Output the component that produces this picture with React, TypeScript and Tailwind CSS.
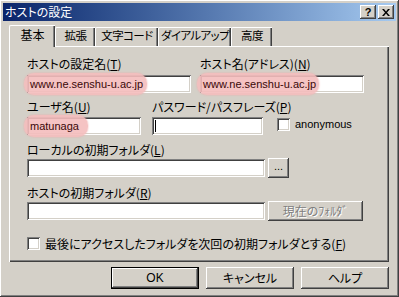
import React from 'react';

const FONT = "font-['Noto_Sans_CJK_JP','Liberation_Sans',sans-serif] [font-feature-settings:'palt']";
const LATIN = "font-['Liberation_Sans','Noto_Sans_CJK_JP',sans-serif]";

const raised =
  'shadow-[inset_-1px_-1px_#404040,inset_1px_1px_#ffffff,inset_-2px_-2px_#808080,inset_2px_2px_#d4d0c8]';
const sunken =
  'shadow-[inset_1px_1px_#808080,inset_-1px_-1px_#ffffff,inset_2px_2px_#404040,inset_-2px_-2px_#d4d0c8]';

const Label = ({ text, k }: { text: string; k: string }) => (
  <div className="h-[12px] leading-[12px] text-[12px] text-black whitespace-nowrap">
    {text}(<span className="underline">{k}</span>)
  </div>
);

const Mark = ({ w }: { w: number }) => (
  <span
    className="absolute -left-[3px] -top-[2px] -bottom-[2px] rounded-[10px] bg-[#f4bcbc]/90 shadow-[0_0_2px_#f0a8a8]"
    style={{ width: w }}
  />
);

const Edit = ({
  w,
  value,
  mark,
  cursor,
}: {
  w: number;
  value?: string;
  mark?: number;
  cursor?: boolean;
}) => (
  <div className={`relative h-[18px] bg-white ${sunken}`} style={{ width: w }}>
    {mark && <Mark w={mark} />}
    {value && (
      <span
        className={`absolute left-[3px] top-0 h-[18px] leading-[18px] text-[11px] text-[#3a0808] ${LATIN}`}
      >
        {value}
      </span>
    )}
    {cursor && <span className="absolute left-[3px] top-[3px] w-[1px] h-[12px] bg-black" />}
  </div>
);

const Check = () => <div className={`w-[13px] h-[13px] bg-white ${sunken}`} />;

const Tab = ({ label, w, active }: { label: string; w: number; active?: boolean }) =>
  active ? (
    <div
      className="relative z-10 h-[22px] -mb-[1px] flex items-center justify-center whitespace-nowrap text-[12px] bg-[#d4d0c8] rounded-tl-[2px] border-t border-l border-white shadow-[inset_-1px_0_#404040,inset_-2px_0_#808080] pb-[3px]"
      style={{ width: w }}
    >
      {label}
    </div>
  ) : (
    <div
      className="h-[19px] flex items-center justify-center whitespace-nowrap tracking-[-0.6px] text-[11.5px] rounded-tl-[2px] border-t border-l border-white shadow-[inset_-1px_0_#404040,inset_-2px_0_#808080] pb-[2px]"
      style={{ width: w }}
    >
      {label}
    </div>
  );

export default function App() {
  return (
    <div
      className={`w-[399px] h-[297px] bg-[#d4d0c8] p-[3px] flex flex-col text-black ${FONT} ${raised}`}
    >
      {/* title bar */}
      <div className="h-[18px] flex items-center justify-between pl-[2px] pr-[2px] bg-gradient-to-r from-[#0a246a] to-[#a6caf0]">
        <span className="text-white text-[12px] leading-[12px]">ホストの設定</span>
        <div className="flex gap-[2px]">
          <div
            className={`w-[16px] h-[14px] bg-[#d4d0c8] flex items-center justify-center text-[11px] font-bold leading-none ${LATIN} ${raised}`}
          >
            ?
          </div>
          <div className={`w-[16px] h-[14px] bg-[#d4d0c8] flex items-center justify-center ${raised}`}>
            <svg width="8" height="7" viewBox="0 0 8 7">
              <path d="M0 0h2l2 2.5L6 0h2L5 3.5 8 7H6L4 4.5 2 7H0l3-3.5z" fill="#000" />
            </svg>
          </div>
        </div>
      </div>

      <div className="pl-[6px] pt-[4px]">
        {/* tabs */}
        <div className="flex items-end h-[21px]">
          <Tab label="基本" w={46} active />
          <Tab label="拡張" w={40} />
          <Tab label="文字コード" w={63} />
          <Tab label="ダイアルアップ" w={73} />
          <Tab label="高度" w={41} />
        </div>

        {/* panel */}
        <div
          className="w-[380px] h-[216px] pl-[18px] pt-[12px] shadow-[inset_1px_1px_#ffffff,inset_-1px_-1px_#404040,inset_-2px_-2px_#808080]"
        >
          <div className="flex">
            <div className="w-[173px]">
              <Label text="ホストの設定名" k="T" />
              <div className="mt-[5px]">
                <Edit w={164} value="www.ne.senshu-u.ac.jp" mark={123} />
              </div>
            </div>
            <div>
              <Label text="ホスト名(アドレス)" k="N" />
              <div className="mt-[5px]">
                <Edit w={164} value="www.ne.senshu-u.ac.jp" mark={122} />
              </div>
            </div>
          </div>

          <div className="flex mt-[8px]">
            <div className="w-[125px]">
              <Label text="ユーザ名" k="U" />
              <div className="mt-[4px]">
                <Edit w={114} value="matunaga" mark={64} />
              </div>
            </div>
            <div className="w-[125px]">
              <Label text="パスワード/パスフレーズ" k="P" />
              <div className="mt-[4px]">
                <Edit w={111} cursor />
              </div>
            </div>
            <div className="flex items-center gap-[5px] mt-[17px] self-start">
              <Check />
              <span className={`text-[11px] leading-[13px] ${LATIN}`}>anonymous</span>
            </div>
          </div>

          <div className="mt-[9px]">
            <Label text="ローカルの初期フォルダ" k="L" />
            <div className="flex items-center gap-[3px] mt-[2px] h-[20px]">
              <Edit w={238} />
              <div
                className={`w-[21px] h-[20px] flex items-center justify-center text-[11px] pb-[4px] ${LATIN} ${raised}`}
              >
                ...
              </div>
            </div>
          </div>

          <div className="mt-[9px]">
            <Label text="ホストの初期フォルダ" k="R" />
            <div className="flex items-center gap-[3px] mt-[2px] h-[20px]">
              <Edit w={238} />
              <div
                className={`w-[95px] h-[20px] flex items-center justify-center text-[12px] text-[#808080] [text-shadow:1px_1px_#ffffff] ${raised}`}
              >
                現在のﾌｫﾙﾀﾞ
              </div>
            </div>
          </div>

          <div className="flex items-center gap-[5px] mt-[16px]">
            <Check />
            <span className="text-[12px] leading-[13px]">
              最後にアクセスしたフォルダを次回の初期フォルダとする(<span className="underline">F</span>)
            </span>
          </div>
        </div>
      </div>

      {/* buttons */}
      <div className="flex justify-end gap-[7px] pr-[7px] mt-[5px]">
        <div className="w-[88px] h-[22px] border border-black">
          <div className={`w-full h-full flex items-center justify-center text-[12px] ${LATIN} ${raised}`}>
            OK
          </div>
        </div>
        <div className={`w-[88px] h-[22px] flex items-center justify-center text-[12px] ${raised}`}>
          キャンセル
        </div>
        <div className={`w-[88px] h-[22px] flex items-center justify-center text-[12px] ${raised}`}>
          ヘルプ
        </div>
      </div>
    </div>
  );
}
